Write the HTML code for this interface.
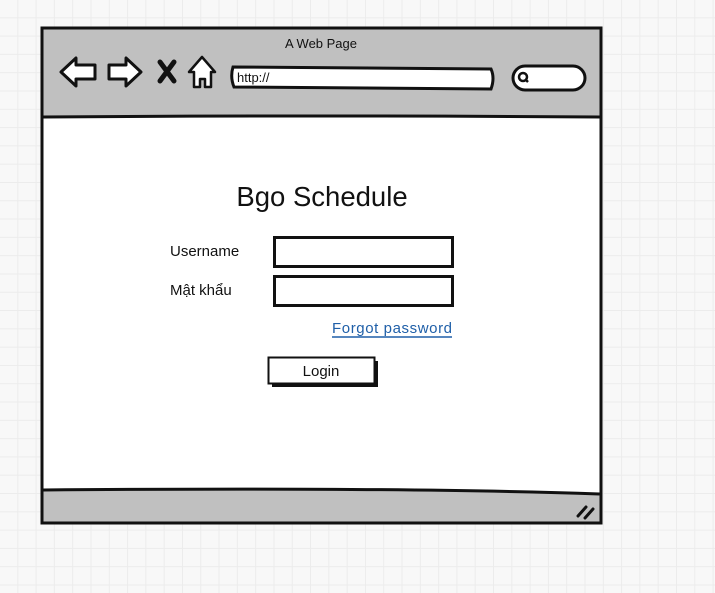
<!DOCTYPE html>
<html><head><meta charset="utf-8"><style>
html,body{margin:0;padding:0}
body{width:715px;height:593px;overflow:hidden;background-color:#f8f8f8;
background-image:linear-gradient(#ececec 1px,transparent 1px),linear-gradient(90deg,#ececec 1px,transparent 1px);
background-size:18.3px 18.3px;background-position:-1px -1px;font-family:"Liberation Sans",sans-serif}
svg{position:absolute;left:0;top:0}
</style></head><body>
<svg width="715" height="593" xmlns="http://www.w3.org/2000/svg">
<rect x="42" y="28" width="559" height="495" fill="#fff" stroke="#111" stroke-width="3"/>
<path d="M43.5 29.5 H599.5 V117 L43.5 117 Z" fill="#c0c0c0"/>
<path d="M43.5 117 Q320 115 599.5 117" fill="none" stroke="#111" stroke-width="3"/>
<path d="M43.5 490 Q400 487 599.5 494 V521.5 H43.5 Z" fill="#c0c0c0"/>
<path d="M43.5 490 Q400 487 599.5 494" fill="none" stroke="#111" stroke-width="3"/>
<rect x="42" y="28" width="559" height="495" fill="none" stroke="#111" stroke-width="3"/>
<text x="321" y="48" font-size="13" text-anchor="middle" fill="#111">A Web Page</text>
<!-- back -->
<path d="M61 72 L76 58 V65 H95 V79 H76 V86 Z" fill="#fff" stroke="#111" stroke-width="3" stroke-linejoin="round"/>
<!-- fwd -->
<path d="M141 72 L126 58 V65 H109 V79 H126 V86 Z" fill="#fff" stroke="#111" stroke-width="3" stroke-linejoin="round"/>
<!-- X -->
<path d="M160 62 L174 81 M174 62 L160 81" stroke="#111" stroke-width="5" stroke-linecap="round"/>
<!-- home -->
<path d="M202 57 L189 72 H194 V87 H200 V79 H205 V87 H211 V72 H215 Z" fill="#fff" stroke="#111" stroke-width="2.5" stroke-linejoin="round"/>
<!-- url -->
<path d="M233 67 L491 69 Q495 78 491 89 L234 87 Q230 77 233 67 Z" fill="#fff" stroke="#111" stroke-width="3"/>
<text x="237" y="82" font-size="13" fill="#111">http://</text>
<!-- search -->
<rect x="513" y="66" width="72" height="24" rx="12" fill="#fff" stroke="#111" stroke-width="3"/>
<circle cx="523" cy="77" r="4" fill="none" stroke="#111" stroke-width="2.5"/>
<path d="M525 79 L528 82" stroke="#111" stroke-width="2.5"/>
<!-- resize -->
<path d="M578 516 L586 507 M585 518 L593 509" stroke="#111" stroke-width="3" stroke-linecap="round"/>
<text x="322" y="206" font-size="27.5" text-anchor="middle" fill="#111">Bgo Schedule</text>
<text x="170" y="256" font-size="15" fill="#111">Username</text>
<text x="170" y="295" font-size="15" fill="#111">Mật khẩu</text>
<rect x="274.5" y="237.5" width="178" height="29" fill="#fff" stroke="#111" stroke-width="3"/>
<rect x="274.5" y="276.5" width="178" height="29" fill="#fff" stroke="#111" stroke-width="3"/>
<text x="452" y="333" font-size="15" text-anchor="end" textLength="120" fill="#1f5fa8">Forgot password</text>
<path d="M332 337 H452" stroke="#1f5fa8" stroke-width="1.5"/>
<rect x="272" y="361" width="106" height="26" fill="#111"/>
<rect x="268.5" y="357.5" width="106" height="26" fill="#fff" stroke="#111" stroke-width="2"/>
<text x="321" y="376" font-size="15" text-anchor="middle" fill="#111">Login</text>
</svg>
</body></html>
